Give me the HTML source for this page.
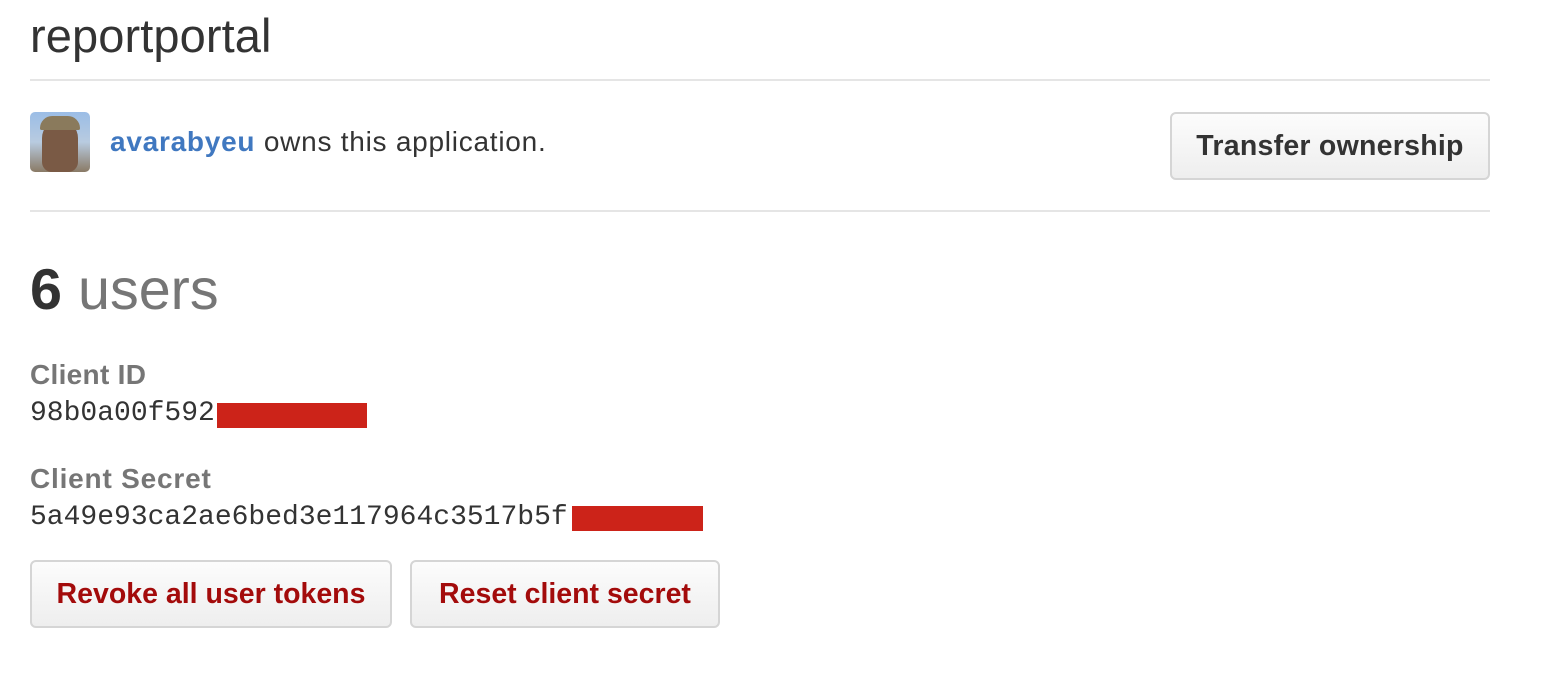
<!DOCTYPE html>
<html><head><meta charset="utf-8"><style>
body{margin:0;background:#fff;width:1558px;height:678px;position:relative;overflow:hidden;font-family:"Liberation Sans",sans-serif;color:#333}
.a{position:absolute}
.hr{position:absolute;left:30px;width:1460px;height:2px;background:#e5e5e5}
.btn{position:absolute;border:2px solid #d5d5d5;border-radius:6px;background:linear-gradient(#fcfcfc,#eee);font-weight:bold;font-size:28.5px;box-sizing:border-box;text-align:center}
.mono{font-family:"Liberation Mono",monospace;font-size:28px;color:#333}
.lbl{font-weight:bold;font-size:28px;color:#767676;letter-spacing:0.8px}
.red{position:absolute;background:#cc2319}
</style></head><body>
<div class="a" style="left:30px;top:8px;font-size:47px;color:#333;letter-spacing:0.1px">reportportal</div>
<div class="hr" style="top:79px"></div>
<div class="a" style="left:30px;top:112px;width:60px;height:60px;border-radius:5px;background:linear-gradient(#9bbde6,#b8cbe0 50%,#8a7a66);overflow:hidden">
 <div class="a" style="left:12px;top:8px;width:36px;height:52px;border-radius:18px 18px 10px 10px;background:#7a5a45"></div>
 <div class="a" style="left:10px;top:4px;width:40px;height:14px;border-radius:14px 14px 2px 2px;background:#8a7a5c"></div>
</div>
<div class="a" style="left:110px;top:126px;font-size:28px;letter-spacing:0.75px"><b style="color:#4078c0">avarabyeu</b> owns this application.</div>
<div class="btn" style="left:1170px;top:112px;width:320px;height:68px;line-height:64px;color:#333;letter-spacing:0.25px">Transfer ownership</div>
<div class="hr" style="top:210px"></div>
<div class="a" style="left:30px;top:257px;font-size:57.5px;color:#767676"><b style="color:#333">6</b> users</div>
<div class="a lbl" style="left:30px;top:359px;letter-spacing:0.3px">Client ID</div>
<div class="a mono" style="left:30px;top:398px">98b0a00f592</div>
<div class="red" style="left:217px;top:403px;width:150px;height:25px"></div>
<div class="a lbl" style="left:30px;top:463px">Client Secret</div>
<div class="a mono" style="left:30px;top:502px">5a49e93ca2ae6bed3e117964c3517b5f</div>
<div class="red" style="left:572px;top:506px;width:131px;height:25px"></div>
<div class="btn" style="left:30px;top:560px;width:362px;height:68px;line-height:64px;color:#a30b0b">Revoke all user tokens</div>
<div class="btn" style="left:410px;top:560px;width:310px;height:68px;line-height:64px;color:#a30b0b">Reset client secret</div>
</body></html>
